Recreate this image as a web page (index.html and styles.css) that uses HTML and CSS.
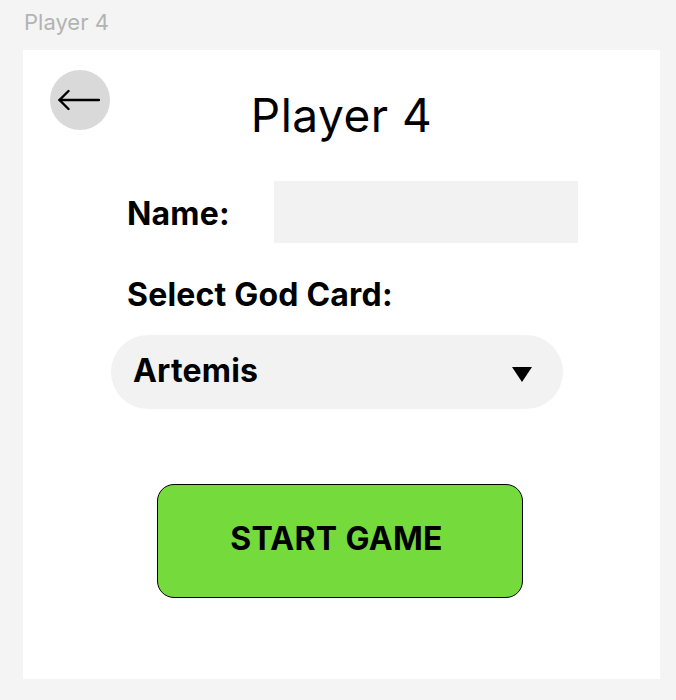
FILE: index.html
```html
<!DOCTYPE html>
<html>
<head>
<meta charset="utf-8">
<link rel="stylesheet" href="styles.css">
</head>
<body>
<div class="page-label">Player 4</div>
<main class="frame">
  <header class="header">
    <button class="back" aria-label="Back">
      <svg width="42" height="22" viewBox="0 0 42 22" fill="none" stroke="#000" stroke-width="2.4" stroke-linecap="round" stroke-linejoin="round">
        <path d="M1.5 11 H41"/>
        <path d="M10.5 2 L1.5 11 L10.5 20"/>
      </svg>
    </button>
    <h1 class="title">Player 4</h1>
    <span></span>
  </header>
  <div class="form">
    <div class="name-row">
      <label class="label name-label">Name:</label>
      <div class="name-input"></div>
    </div>
    <div class="label select-label">Select God Card:</div>
  </div>
  <div class="dropdown">
    <span class="dropdown-value">Artemis</span>
    <svg class="caret" width="20" height="15" viewBox="0 0 20 15"><path d="M0 0 H20 L10 15 Z" fill="#000"/></svg>
  </div>
  <button class="start">START GAME</button>
</main>
</body>
</html>
```
FILE: styles.css
```css
* { box-sizing: border-box; }
html, body { margin: 0; padding: 0; }
body {
  background: #f4f4f4;
  font-family: Inter, "Noto Sans", sans-serif;
  color: #000;
  width: 676px;
  height: 700px;
}
.page-label {
  font-size: 22px;
  color: #b3b3b3;
  line-height: 26px;
  padding: 9px 0 0 24px;
  height: 50px;
}
.frame {
  margin-left: 23px;
  width: 637px;
  height: 629px;
  background: #fff;
  padding: 20px 27px 0;
}
.header {
  display: grid;
  grid-template-columns: 1fr auto 1fr;
  align-items: start;
}
.back {
  width: 60px;
  height: 60px;
  border-radius: 50%;
  background: #d9d9d9;
  border: 0;
  padding: 0;
  display: flex;
  align-items: center;
  justify-content: center;
  padding-right: 2px;
}
.title {
  margin: 18px 0 0;
  font-size: 46px;
  font-weight: 400;
  line-height: 54px;
  letter-spacing: 0.5px;
}
.form {
  padding-left: 77px;
}
.name-row {
  display: flex;
  align-items: center;
  margin-top: 39px;
}
.label {
  font-size: 32px;
  font-weight: 700;
  line-height: 38px;
  letter-spacing: 0.2px;
}
.name-label {
  padding-top: 4px;
}
.name-input {
  width: 304px;
  height: 62px;
  background: #f2f2f2;
  margin-left: auto;
  margin-right: 55px;
}
.select-label {
  margin-top: 33px;
}
.dropdown {
  margin: 21px 0 0 61px;
  width: 452px;
  height: 74px;
  border-radius: 37px;
  background: #f2f2f2;
  display: flex;
  align-items: center;
  justify-content: space-between;
  padding: 0 31px 0 22px;
}
.dropdown-value {
  font-size: 32px;
  font-weight: 700;
  line-height: 38px;
  padding-bottom: 3px;
  letter-spacing: 0.2px;
}
.caret { margin-top: 5px; }
.start {
  display: block;
  margin: 75px 0 0 107px;
  width: 366px;
  height: 114px;
  background: #75db3c;
  border: 1px solid #000;
  border-radius: 17px;
  font-family: Inter, "Noto Sans", sans-serif;
  font-size: 32px;
  font-weight: 700;
  line-height: 38px;
  letter-spacing: 0.3px;
  color: #000;
  padding: 0 7px 4px 0;
}
```
